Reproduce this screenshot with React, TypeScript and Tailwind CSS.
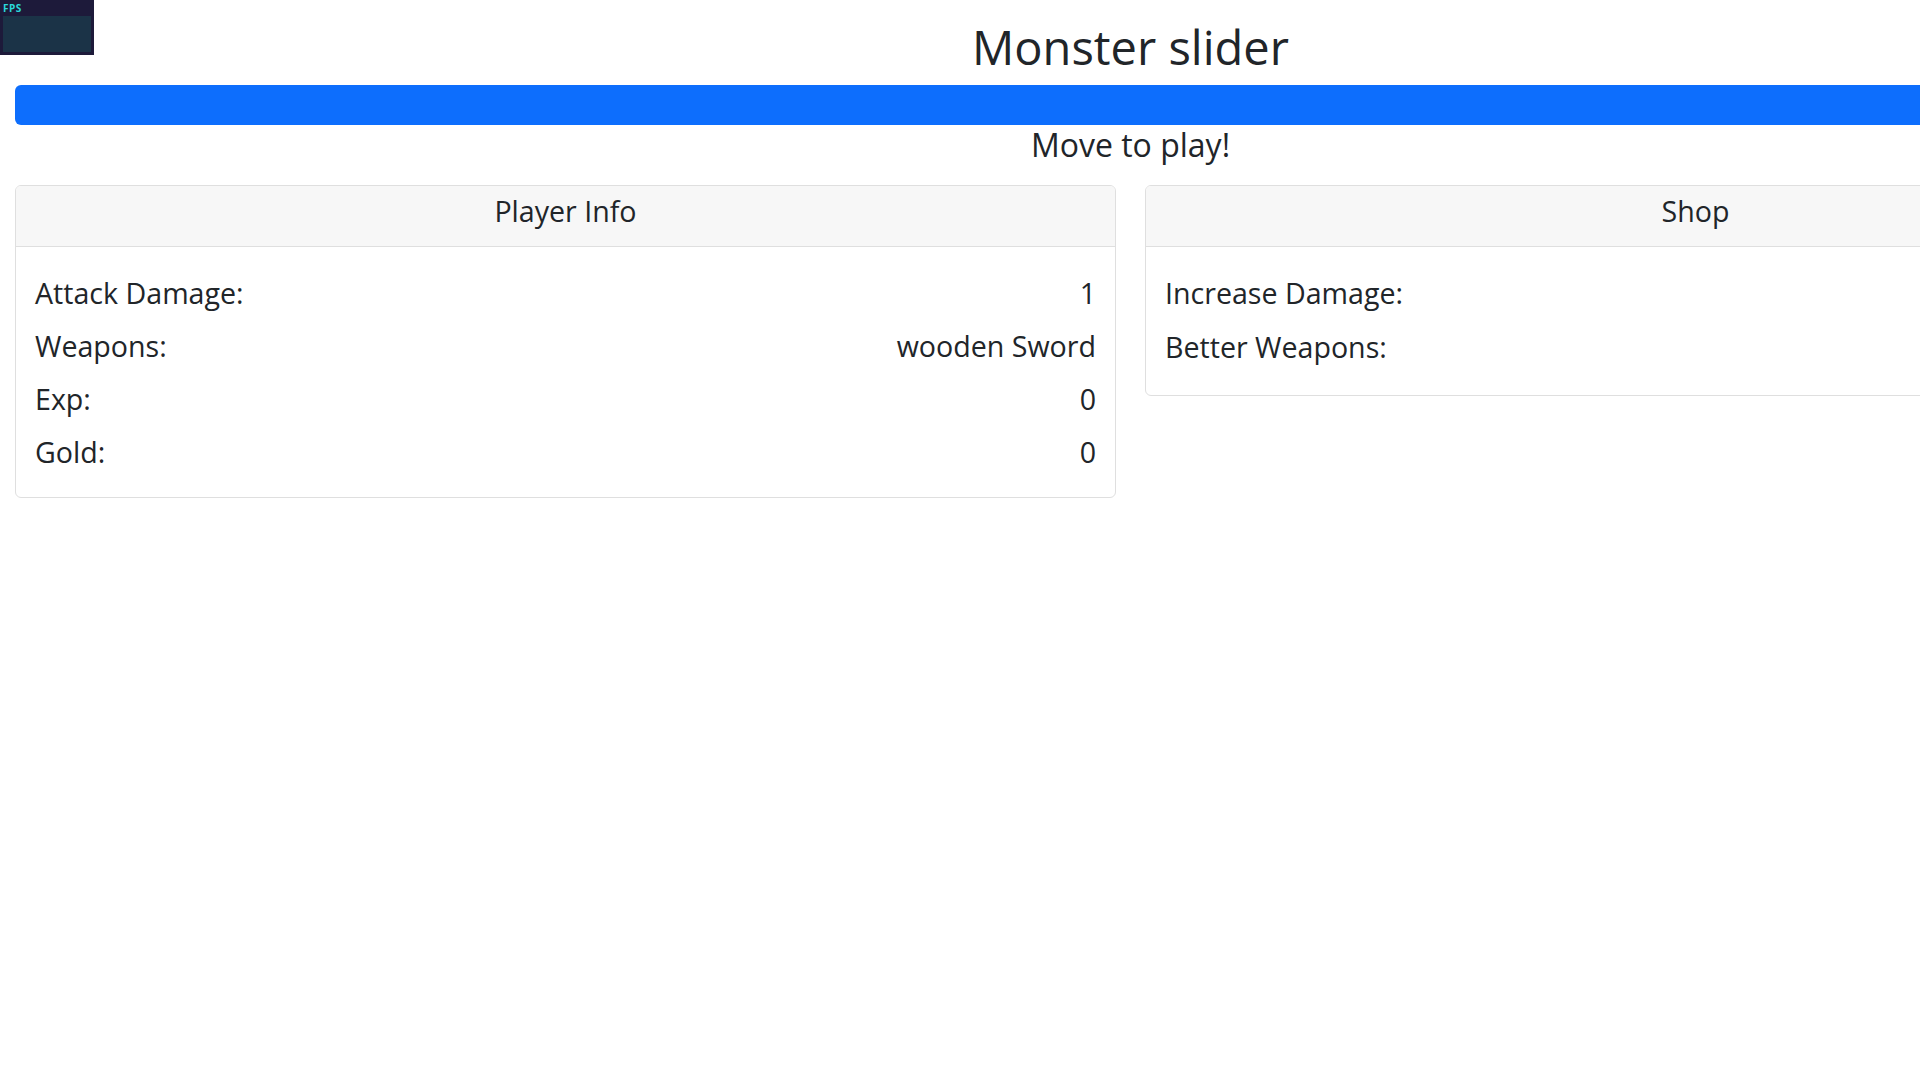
import React from "react";

const playerRows: [string, string][] = [
  ["Attack Damage:", "1"],
  ["Weapons:", "wooden Sword"],
  ["Exp:", "0"],
  ["Gold:", "0"],
];

const shopRows = ["Increase Damage:", "Better Weapons:"];

function Card({
  title,
  bodyClass,
  children,
}: {
  title: string;
  bodyClass: string;
  children: React.ReactNode;
}) {
  return (
    <div className="w-[1101px] shrink-0 self-start border border-[#dfdfdf] rounded-[6px] overflow-hidden bg-white">
      <div className="h-[61px] pt-[4px] leading-[42px] text-center bg-[#f7f7f7] border-b border-[#dfdfdf]">
        {title}
      </div>
      <div className={bodyClass}>{children}</div>
    </div>
  );
}

export default function App() {
  return (
    <div
      className="relative w-[1920px] h-[1080px] overflow-hidden bg-white text-[#212529] text-[28.6px]"
      style={{ fontFamily: "'Open Sans', 'Noto Sans', sans-serif" }}
    >
      <div className="absolute top-0 left-0 z-10 w-[94px] h-[55px] bg-[#1d1a3a] px-[3px] pt-[2px]">
        <div className="text-[10px] leading-[12px] font-bold text-[#2ad8dc] tracking-[0.5px]">FPS</div>
        <div className="mt-[2px] w-[88px] h-[36px] bg-[#1b3347]" />
      </div>

      <div className="w-[2261px] px-[15px]">
        <h1 className="pt-[18px] mb-[9px] text-center text-[47px] leading-[58px] font-normal">
          Monster slider
        </h1>
        <div className="h-[40px] rounded-[6px] bg-[#0d6efd]" />
        <div className="mt-[1px] text-center text-[32px] leading-[37px]">Move to play!</div>

        <div className="mt-[22px] flex gap-[29px] items-start">
          <Card title="Player Info" bodyClass="px-[19px] py-[23px] flex flex-col gap-[8px]">
            {playerRows.map(([k, v]) => (
              <div key={k} className="flex justify-between leading-[45px]">
                <span>{k}</span>
                <span>{v}</span>
              </div>
            ))}
          </Card>
          <Card title="Shop" bodyClass="px-[19px] pt-[23px] pb-[25px] flex flex-col gap-[8px]">
            {shopRows.map((k) => (
              <div key={k} className="leading-[46px]">
                {k}
              </div>
            ))}
          </Card>
        </div>
      </div>
    </div>
  );
}
